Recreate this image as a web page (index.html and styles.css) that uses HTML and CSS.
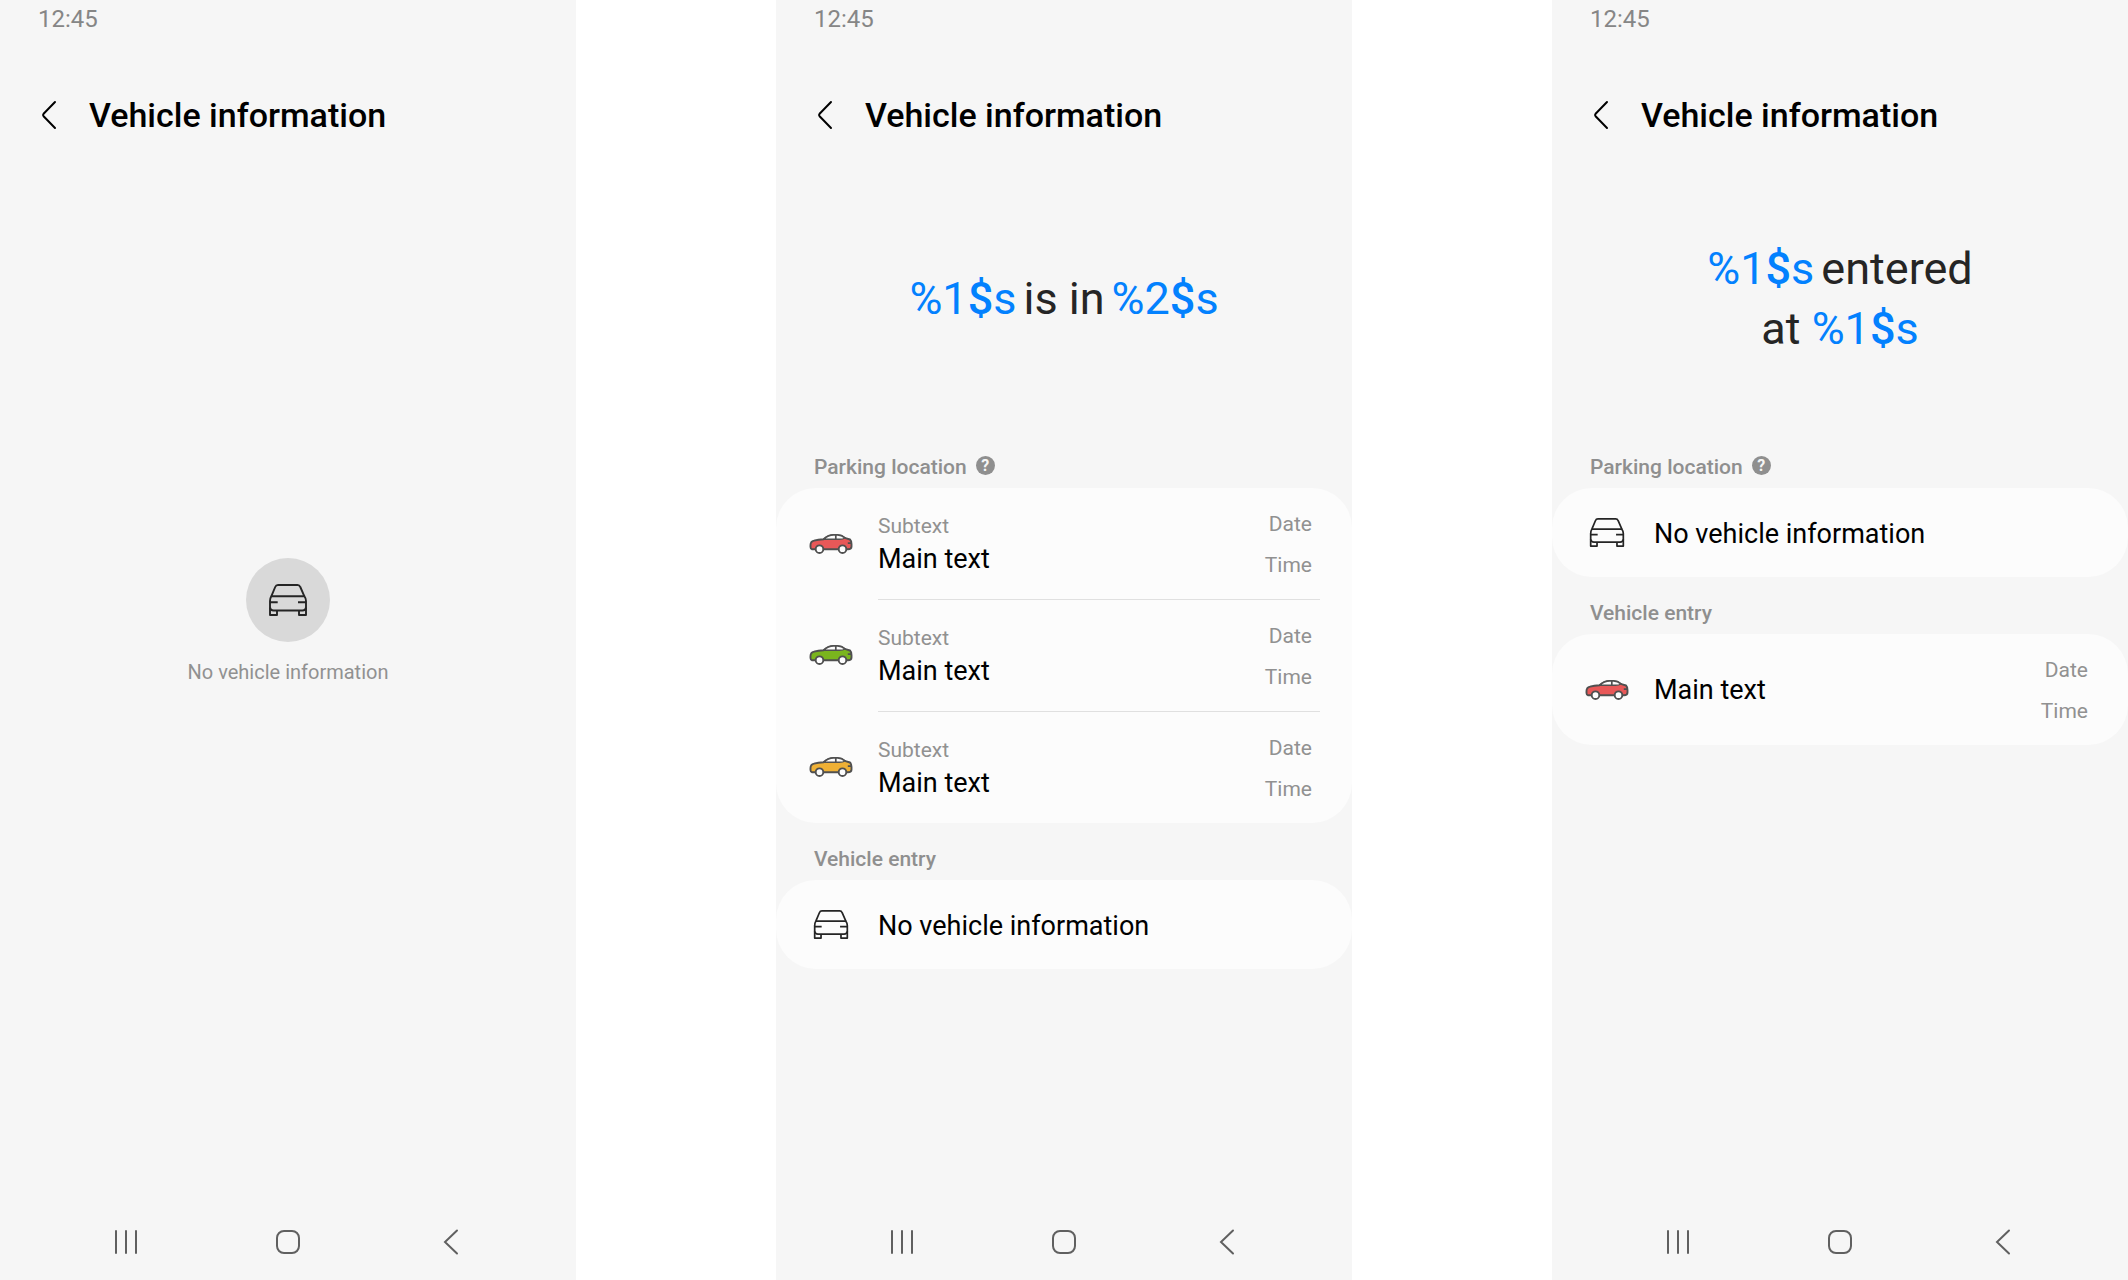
FILE: index.html
```html
<!DOCTYPE html>
<html lang="en">
<head>
<meta charset="utf-8">
<title>Vehicle information</title>
<link rel="stylesheet" href="styles.css">
</head>
<body>
<svg class="sprite" aria-hidden="true">
  <symbol id="chevron" viewBox="0 0 16 30">
    <path d="M14 2L2.600 13.800Q1.500 15 2.600 16.200L14 28" fill="none" stroke="currentColor" stroke-width="2" stroke-linecap="round"/>
  </symbol>
  <symbol id="car-front" viewBox="0 0 38 32">
    <g fill="none" stroke="#252525" stroke-width="1.900" stroke-linejoin="round">
      <path d="M2.300 12.300L6.200 3Q7 1 9 1H28.500Q30.500 1 31.300 3L35.400 12.300"/>
      <path d="M2.300 12.300H35.400Q37 14.500 37 17V31H30V26.500M2.300 12.300Q1 14.500 1 17V31H8V26.500"/>
      <path d="M1 23.500Q1.500 26.500 4.500 26.500H33.500Q36.500 26.500 37 23.500M1 18.300H8.700M37 18.300H29"/>
    </g>
  </symbol>
  <symbol id="car-side" viewBox="0 0 43 20">
    <g stroke="#505050" stroke-width="1.900" stroke-linejoin="round">
      <path fill="currentColor" d="M2.500 15.300Q1 15 1 13V11Q1 7.500 4.500 6.600Q8.500 5.300 14 5.200Q19 1 24 1H28Q32 1 36 4.200L40.500 5.500Q42 7 42 10V12.500Q42 15.300 38.500 15.300Z"/>
      <path fill="#fcfcfc" stroke-width="1.400" d="M14 5.300Q19 1 24 1H28Q32 1 35.500 4Q33.500 5.300 30 5.300Z"/>
      <path fill="none" stroke-width="1.700" d="M26.300 1V5.300M42 9.200H38.300"/>
      <circle cx="10" cy="15.200" r="3.800" fill="#fcfcfc"/>
      <circle cx="33" cy="15.200" r="3.800" fill="#fcfcfc"/>
    </g>
  </symbol>
  <symbol id="recents" viewBox="0 0 26 26">
    <path d="M3 2V24M13 2V24M23 2V24" fill="none" stroke="currentColor" stroke-width="2" stroke-linecap="round"/>
  </symbol>
  <symbol id="home" viewBox="0 0 26 26">
    <rect x="2" y="2" width="22" height="22" rx="7" fill="none" stroke="currentColor" stroke-width="2"/>
  </symbol>
  <symbol id="nav-back" viewBox="0 0 26 26">
    <path d="M20 1.500L8 13L20 24.500" fill="none" stroke="currentColor" stroke-width="2" stroke-linecap="round"/>
  </symbol>
</svg>

<main class="screens">
  <section class="screen">
    <div class="status">12:45</div>
    <header class="app-bar">
      <button class="back" type="button" aria-label="Back"><svg><use href="#chevron"/></svg></button>
      <h1>Vehicle information</h1>
    </header>
    <div class="content empty">
      <div class="empty-badge"><svg><use href="#car-front"/></svg></div>
      <p>No vehicle information</p>
    </div>
    <nav class="nav-bar">
      <button type="button" aria-label="Recent apps"><svg><use href="#recents"/></svg></button>
      <button type="button" aria-label="Home"><svg><use href="#home"/></svg></button>
      <button type="button" aria-label="Go back"><svg><use href="#nav-back"/></svg></button>
    </nav>
  </section>

  <section class="screen">
    <div class="status">12:45</div>
    <header class="app-bar">
      <button class="back" type="button" aria-label="Back"><svg><use href="#chevron"/></svg></button>
      <h1>Vehicle information</h1>
    </header>
    <div class="content">
      <div class="summary">
        <p class="summary-line"><em>%1<b>$</b>s</em><span>is in</span><em>%2<b>$</b>s</em></p>
      </div>
      <div class="section-head">
        <h2>Parking location</h2>
        <button class="help" type="button" aria-label="Help">?</button>
      </div>
      <ul class="card">
        <li class="row">
          <svg class="car red"><use href="#car-side"/></svg>
          <div class="row-body">
            <div class="label"><span class="sub">Subtext</span><span class="title">Main text</span></div>
            <div class="when"><span>Date</span><span>Time</span></div>
          </div>
        </li>
        <li class="row">
          <svg class="car green"><use href="#car-side"/></svg>
          <div class="row-body">
            <div class="label"><span class="sub">Subtext</span><span class="title">Main text</span></div>
            <div class="when"><span>Date</span><span>Time</span></div>
          </div>
        </li>
        <li class="row">
          <svg class="car amber"><use href="#car-side"/></svg>
          <div class="row-body">
            <div class="label"><span class="sub">Subtext</span><span class="title">Main text</span></div>
            <div class="when"><span>Date</span><span>Time</span></div>
          </div>
        </li>
      </ul>
      <div class="section-head"><h2>Vehicle entry</h2></div>
      <ul class="card">
        <li class="row none">
          <svg class="front"><use href="#car-front"/></svg>
          <div class="row-body"><span class="title">No vehicle information</span></div>
        </li>
      </ul>
    </div>
    <nav class="nav-bar">
      <button type="button" aria-label="Recent apps"><svg><use href="#recents"/></svg></button>
      <button type="button" aria-label="Home"><svg><use href="#home"/></svg></button>
      <button type="button" aria-label="Go back"><svg><use href="#nav-back"/></svg></button>
    </nav>
  </section>

  <section class="screen">
    <div class="status">12:45</div>
    <header class="app-bar">
      <button class="back" type="button" aria-label="Back"><svg><use href="#chevron"/></svg></button>
      <h1>Vehicle information</h1>
    </header>
    <div class="content">
      <div class="summary">
        <p class="summary-line"><em>%1<b>$</b>s</em><span>entered</span></p>
        <p>at <em>%1<b>$</b>s</em></p>
      </div>
      <div class="section-head">
        <h2>Parking location</h2>
        <button class="help" type="button" aria-label="Help">?</button>
      </div>
      <ul class="card">
        <li class="row none">
          <svg class="front"><use href="#car-front"/></svg>
          <div class="row-body"><span class="title">No vehicle information</span></div>
        </li>
      </ul>
      <div class="section-head"><h2>Vehicle entry</h2></div>
      <ul class="card">
        <li class="row">
          <svg class="car red"><use href="#car-side"/></svg>
          <div class="row-body">
            <div class="label"><span class="title">Main text</span></div>
            <div class="when"><span>Date</span><span>Time</span></div>
          </div>
        </li>
      </ul>
    </div>
    <nav class="nav-bar">
      <button type="button" aria-label="Recent apps"><svg><use href="#recents"/></svg></button>
      <button type="button" aria-label="Home"><svg><use href="#home"/></svg></button>
      <button type="button" aria-label="Go back"><svg><use href="#nav-back"/></svg></button>
    </nav>
  </section>
</main>
</body>
</html>
```
FILE: styles.css
```css
* {
  box-sizing: border-box;
}

body,
h1,
h2,
p,
ul {
  margin: 0;
  padding: 0;
}

body {
  background: #fff;
  color: #000;
  font-family: Roboto, "Liberation Sans", sans-serif;
}

button {
  display: flex;
  align-items: center;
  justify-content: center;
  margin: 0;
  padding: 0;
  border: 0;
  background: none;
  color: inherit;
  font: inherit;
  cursor: pointer;
}

.sprite {
  display: none;
}

.screens {
  display: flex;
  gap: 200px;
  min-height: 100vh;
}

.screen {
  display: flex;
  flex: 1;
  flex-direction: column;
  min-width: 0;
  background: #f6f6f6;
}

.status {
  padding: 4px 38px;
  color: #868686;
  font-size: 24px;
  line-height: 30px;
}

.app-bar {
  display: flex;
  align-items: center;
  height: 80px;
  margin-top: 37px;
  padding: 0 33px;
}

.back {
  width: 32px;
  height: 48px;
}

.back svg {
  width: 16px;
  height: 30px;
}

.app-bar h1 {
  margin-left: 24px;
  font-size: 34px;
  font-weight: 500;
  line-height: 40px;
}

.content {
  flex: 1;
}

.empty {
  display: flex;
  flex-direction: column;
  align-items: center;
  padding-top: 403px;
}

.empty-badge {
  display: flex;
  align-items: center;
  justify-content: center;
  width: 84px;
  height: 84px;
  border-radius: 50%;
  background: #d9d9d9;
}

.empty-badge svg {
  width: 38px;
  height: 32px;
}

.empty p {
  margin-top: 16px;
  color: #919191;
  font-size: 20px;
  line-height: 28px;
}

.summary {
  display: flex;
  flex-direction: column;
  align-items: center;
  justify-content: center;
  height: 276px;
  padding-top: 12px;
  color: #252525;
  font-size: 45px;
  line-height: 60px;
}

.summary em {
  color: #0381fe;
  font-style: normal;
}

.summary b {
  font-weight: 500;
}

.summary-line {
  display: flex;
  gap: 7px;
}

.section-head {
  display: flex;
  align-items: flex-end;
  gap: 9px;
  height: 57px;
  padding: 0 38px 8px;
  color: #8f8f8f;
}

.section-head h2 {
  font-size: 21px;
  font-weight: 500;
  line-height: 26px;
}

.help {
  width: 19px;
  height: 19px;
  margin-bottom: 5px;
  border-radius: 50%;
  background: #8f8f8f;
  color: #f6f6f6;
  font-size: 16px;
  font-weight: 700;
  line-height: 19px;
}

.card {
  overflow: hidden;
  border-radius: 40px;
  background: #fcfcfc;
  list-style: none;
}

.row {
  display: flex;
  align-items: center;
  padding: 0 32px 0 33px;
}

.row svg {
  flex: none;
  width: 44px;
}

.car {
  height: 20px;
}

.front {
  height: 29px;
}

.red {
  color: #e85858;
}

.green {
  color: #7ab51d;
}

.amber {
  color: #eeb035;
}

.row-body {
  display: flex;
  flex: 1;
  align-items: center;
  justify-content: space-between;
  min-height: 111px;
  margin-left: 25px;
  padding-right: 8px;
}

.row + .row .row-body {
  min-height: 112px;
  border-top: 1px solid #e0e0e0;
}

.none .row-body {
  min-height: 89px;
  padding-top: 2px;
}

.label,
.when {
  display: flex;
  flex-direction: column;
}

.title {
  font-size: 27px;
  line-height: 36px;
}

.sub {
  color: #919191;
  font-size: 21px;
  line-height: 30px;
}

.when {
  padding-top: 2px;
  color: #919191;
  font-size: 21px;
  line-height: 41px;
  text-align: right;
}

.nav-bar {
  display: grid;
  grid-template-columns: repeat(3, 1fr);
  justify-items: center;
  padding: 0 45px 14px;
  color: #606060;
}

.nav-bar button {
  width: 48px;
  height: 48px;
}

.nav-bar svg {
  width: 26px;
  height: 26px;
}
```
